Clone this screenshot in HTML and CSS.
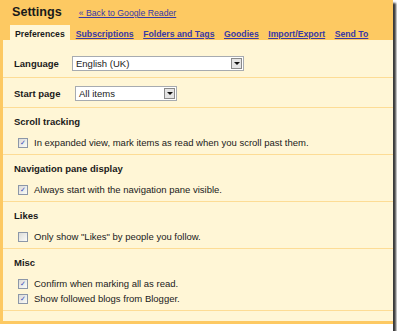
FILE: index.html
```html
<!DOCTYPE html>
<html lang="en">

<head>
    <meta charset="UTF-8">
    <title>Settings</title>
    <link rel="stylesheet" href="styles.css">
</head>

<body>
    <div class="shot">
        <div class="frame">
            <div class="titleRow">
                <h1 class="title">Settings</h1>
                <a class="backLink" href="#">&laquo; Back to Google Reader</a>
            </div>
            <div class="tabs">
                <span class="tab active">Preferences</span>
                <a class="tab" href="#">Subscriptions</a>
                <a class="tab" href="#">Folders and Tags</a>
                <a class="tab" href="#">Goodies</a>
                <a class="tab" href="#">Import/Export</a>
                <a class="tab" href="#">Send To</a>
            </div>

            <div class="panel">
                <div class="row first">
                    <span class="label">Language</span>
                    <span class="select lang"><span class="selText">English (UK)</span><span class="arrow"></span></span>
                </div>
                <div class="row">
                    <span class="label">Start page</span>
                    <span class="select start"><span class="selText">All items</span><span class="arrow"></span></span>
                </div>

                <div class="section">
                    <h2>Scroll tracking</h2>
                    <div class="check"><span class="box on"></span>In expanded view, mark items as read when you scroll past them.</div>
                </div>
                <div class="section">
                    <h2>Navigation pane display</h2>
                    <div class="check"><span class="box on"></span>Always start with the navigation pane visible.</div>
                </div>
                <div class="section">
                    <h2>Likes</h2>
                    <div class="check"><span class="box"></span>Only show "Likes" by people you follow.</div>
                </div>
                <div class="section">
                    <h2>Misc</h2>
                    <div class="check"><span class="box on"></span>Confirm when marking all as read.</div>
                    <div class="check"><span class="box on"></span>Show followed blogs from Blogger.</div>
                </div>
                <div class="tail"></div>
            </div>
        </div>
    </div>
</body>

</html>
```

FILE: styles.css
```css
body {
    margin: 0;
    background: #fff;
    font-family: "Liberation Sans", Arial, sans-serif;
    color: #1a1a1a;
}

.shot {
    width: 393px;
    height: 331px;
    background: #fff;
    box-shadow: 3px 3px 2px #3a3a3a;
}

.frame {
    background: #fdc962;
    border-left: 3px solid #fdc962;
}

.titleRow {
    display: flex;
    align-items: baseline;
    padding: 4px 0 0 9px;
    height: 20px;
    box-sizing: border-box;
}

.title {
    margin: 0;
    font-size: 12.6px;
    font-weight: bold;
    line-height: 17px;
}

.backLink {
    margin-left: 17px;
    font-size: 8.7px;
    color: #3838a6;
}

.tabs {
    display: flex;
    align-items: flex-end;
    height: 20px;
    padding-left: 7px;
}

.tab {
    font-size: 8.7px;
    font-weight: bold;
    color: #3838a6;
    margin-right: 9.5px;
    line-height: 12px;
    padding-top: 3px;
}

.tab.active {
    background: #fff6d6;
    color: #1a1a1a;
    padding: 3px 5px 0;
    margin-right: 6px;
}

.panel {
    background: #fff6d6;
    padding-top: 9px;
    border-bottom: 3px solid #fdc962;
}

.row {
    display: flex;
    align-items: center;
    padding: 8px 0 6px 11px;
    border-bottom: 1px solid #fddc95;
}

.row.first {
    padding: 7px 0 6px 11px;
}

.label {
    font-size: 9.5px;
    font-weight: bold;
    width: 58px;
}

.select {
    display: flex;
    align-items: center;
    justify-content: space-between;
    height: 13px;
    background: #fff;
    border: 1px solid #a7abb0;
    font-size: 9.5px;
}

.select.lang {
    width: 170px;
}

.select.start {
    width: 100px;
    margin-left: 3px;
}

.selText {
    padding-left: 3px;
}

.arrow {
    width: 11px;
    height: 11px;
    margin-right: 1px;
    background: #e4e4e4;
    border: 1px solid #8a8a8a;
    box-sizing: border-box;
    display: flex;
    align-items: center;
    justify-content: center;
}

.arrow::after {
    content: '';
    border-left: 3px solid transparent;
    border-right: 3px solid transparent;
    border-top: 3px solid #111;
}

.section {
    padding: 8px 0 4px 11px;
    border-bottom: 1px solid #fddc95;
}

.section h2 {
    margin: 0 0 8px;
    font-size: 9.5px;
    font-weight: bold;
    line-height: 12px;
}

.check {
    display: flex;
    align-items: center;
    font-size: 9.5px;
    line-height: 14px;
    padding-left: 4px;
}

.check + .check {
    margin-top: 1px;
}

.box {
    width: 8px;
    height: 8px;
    margin-right: 6px;
    border: 1px solid #8c97a8;
    background: linear-gradient(135deg, #dcdcd8, #fbfbf8);
    display: flex;
    align-items: center;
    justify-content: center;
    font-size: 8px;
    line-height: 8px;
    color: #3a4fb8;
}

.box.on::after {
    content: '\2713';
    font-family: "DejaVu Sans", sans-serif;
    font-weight: bold;
    font-size: 7px;
}

.tail {
    height: 10px;
}
```
